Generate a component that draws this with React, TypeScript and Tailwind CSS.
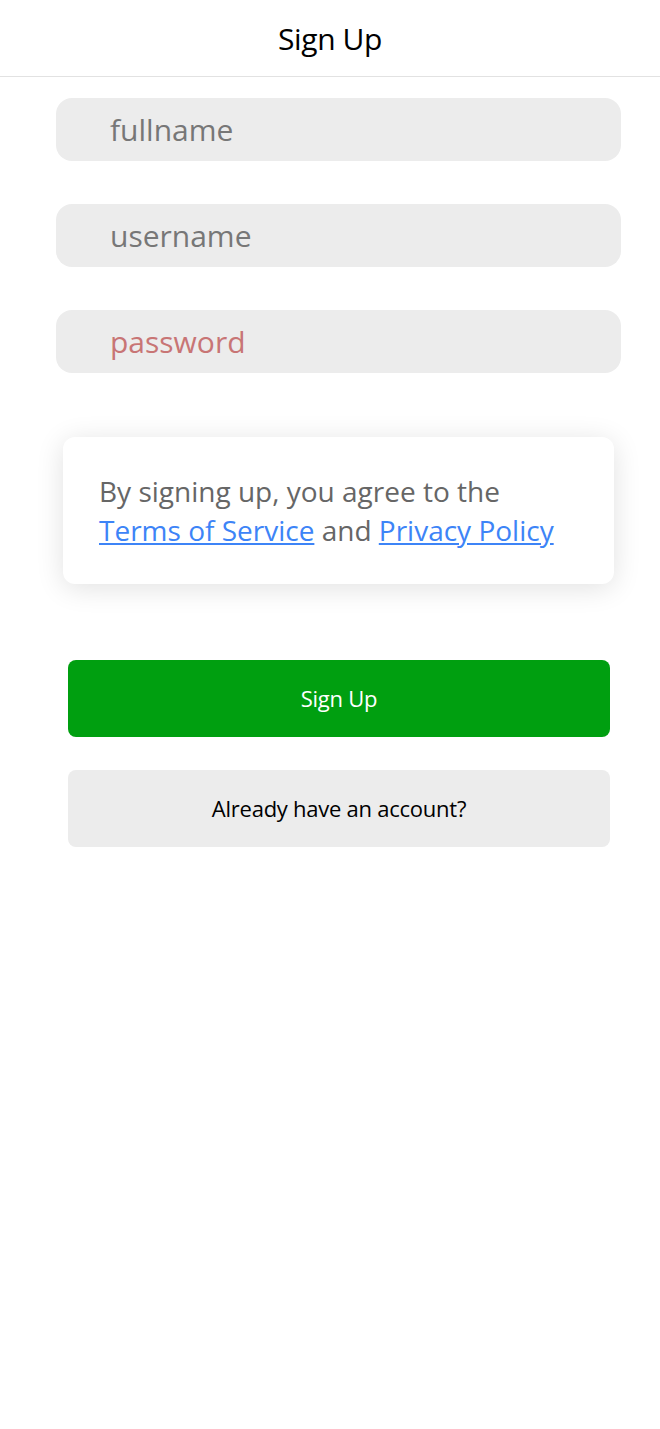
const fields = [
  { label: "fullname", color: "text-[#777777]" },
  { label: "username", color: "text-[#777777]" },
  { label: "password", color: "text-[#c87575]" },
];

const App = () => {
  return (
    <div className="min-h-[1429px] bg-white font-['Open_Sans',sans-serif]">
      <header className="h-[77px] border-b border-[#e2e2e2] flex items-center justify-center">
        <h1 className="text-[30px] text-black tracking-[-0.4px]">Sign Up</h1>
      </header>

      <div className="ml-[56px] w-[565px] pt-[21px] flex flex-col gap-[43px]">
        {fields.map((f) => (
          <div
            key={f.label}
            className="h-[63px] rounded-[16px] bg-[#ececec] flex items-center pl-[54px]"
          >
            <span className={`text-[30px] ${f.color}`}>{f.label}</span>
          </div>
        ))}
      </div>

      <div className="ml-[63px] w-[551px] mt-[64px] h-[147px] rounded-[12px] bg-white shadow-[0_4px_28px_rgba(0,0,0,0.12)] px-[36px] flex items-center">
        <p className="text-[28px] leading-[39px] text-[#666666]">
          By signing up, you agree to the
          <br />
          <a href="#" className="text-[#3d84f7] underline">Terms of Service</a> and{" "}
          <a href="#" className="text-[#3d84f7] underline">Privacy Policy</a>
        </p>
      </div>

      <div className="ml-[68px] w-[542px] mt-[76px] flex flex-col gap-[33px]">
        <button className="h-[77px] rounded-[8px] bg-[#009f10] text-white text-[22px] tracking-[-0.25px]">
          Sign Up
        </button>
        <button className="h-[77px] rounded-[8px] bg-[#ececec] text-black text-[22px] tracking-[-0.25px]">
          Already have an account?
        </button>
      </div>
    </div>
  );
};

export default App;
